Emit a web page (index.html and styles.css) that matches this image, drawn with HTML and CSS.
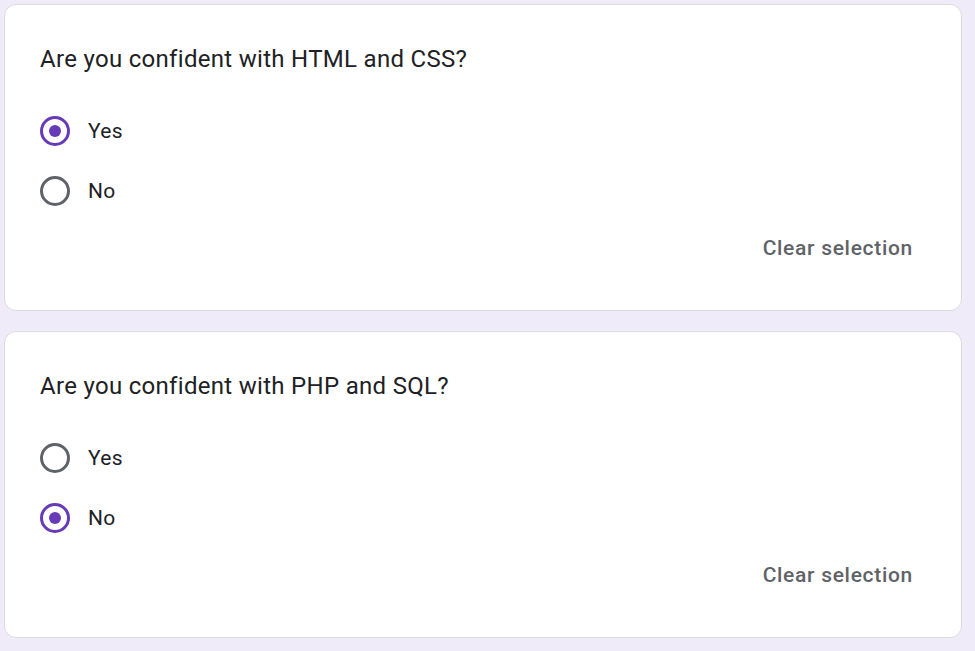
FILE: index.html
```html
<!DOCTYPE html>
<html lang="en">
<head>
<meta charset="utf-8">
<title>Form</title>
<link rel="stylesheet" href="styles.css">
</head>
<body>
<main class="page">
  <section class="card">
    <div class="question">Are you confident with HTML and CSS?</div>
    <div class="options">
      <label class="option"><span class="radio checked"></span><span class="label">Yes</span></label>
      <label class="option"><span class="radio"></span><span class="label">No</span></label>
    </div>
    <div class="actions"><span class="clear">Clear selection</span></div>
  </section>
  <section class="card">
    <div class="question">Are you confident with PHP and SQL?</div>
    <div class="options">
      <label class="option"><span class="radio"></span><span class="label">Yes</span></label>
      <label class="option"><span class="radio checked"></span><span class="label">No</span></label>
    </div>
    <div class="actions"><span class="clear">Clear selection</span></div>
  </section>
</main>
</body>
</html>
```
FILE: styles.css
```css
html, body {
  margin: 0;
  padding: 0;
  background: #f0ebf8;
}
body {
  font-family: Roboto, "Liberation Sans", sans-serif;
  color: #202124;
}
.page {
  display: flex;
  flex-direction: column;
  gap: 20px;
  padding: 4px 13px 0 4px;
}
.card {
  background: #fff;
  border: 1px solid #dadce0;
  border-radius: 12px;
  padding: 36px 35px 35px 35px;
  display: flex;
  flex-direction: column;
}
.question {
  font-size: 24px;
  line-height: 36px;
  letter-spacing: 0.3px;
}
.options {
  margin-top: 24px;
  display: flex;
  flex-direction: column;
}
.option {
  display: flex;
  align-items: center;
  height: 60px;
  gap: 18px;
}
.radio {
  width: 30px;
  height: 30px;
  box-sizing: border-box;
  border: 3px solid #5f6368;
  border-radius: 50%;
  display: flex;
  align-items: center;
  justify-content: center;
  flex: none;
}
.radio.checked {
  border-color: #673ab7;
}
.radio.checked::after {
  content: "";
  width: 12px;
  height: 12px;
  border-radius: 50%;
  background: #673ab7;
}
.label {
  font-size: 21px;
  letter-spacing: 0.3px;
}
.actions {
  display: flex;
  justify-content: flex-end;
  height: 54px;
  align-items: center;
}
.clear {
  font-size: 21px;
  font-weight: 500;
  color: #5f6368;
  padding: 0 13px 0 0;
  letter-spacing: 0.7px;
}
```
